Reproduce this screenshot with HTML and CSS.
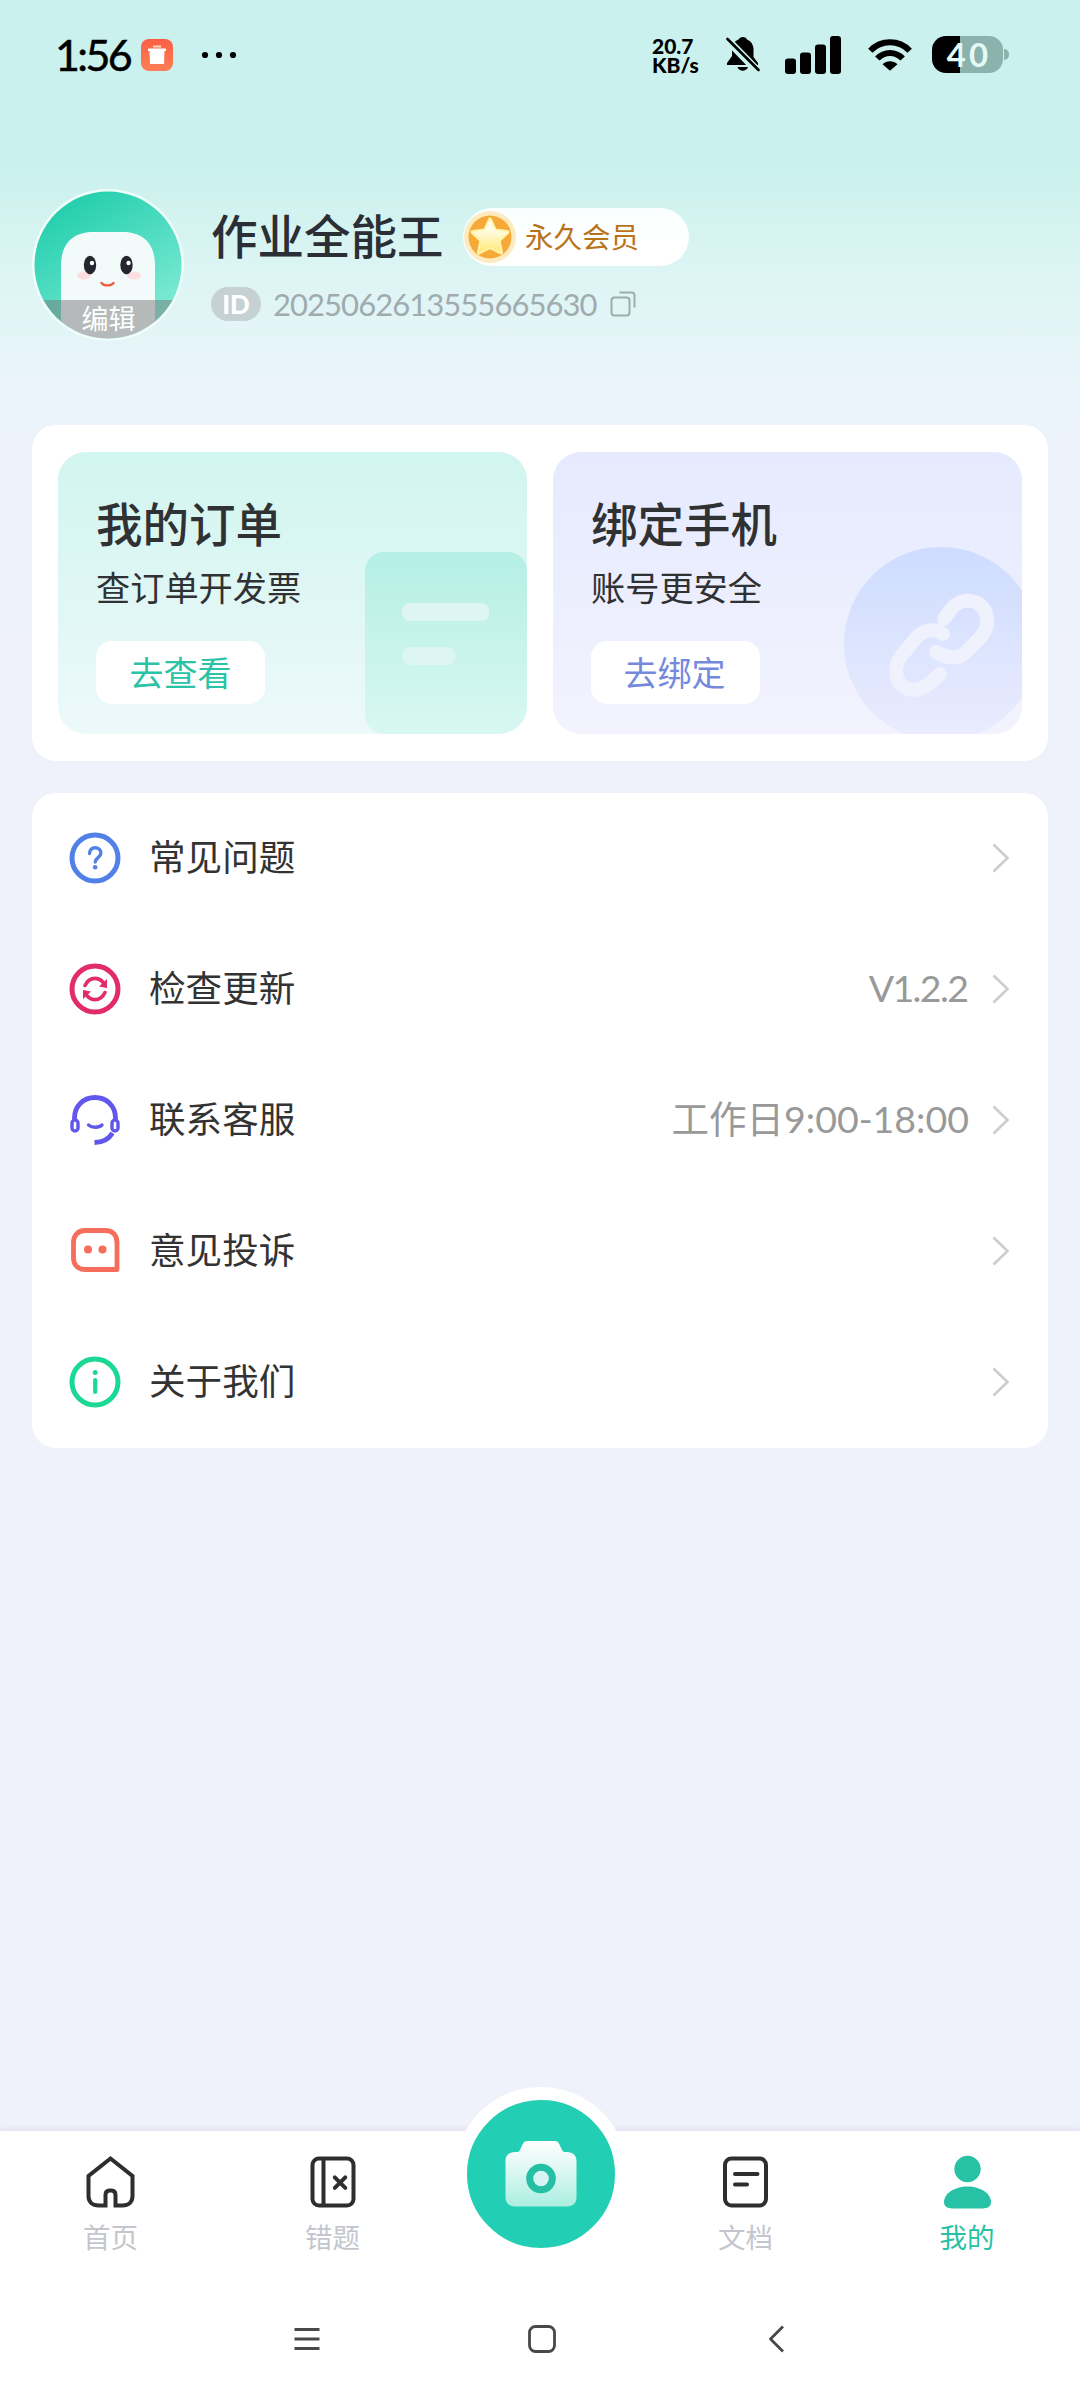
FILE: index.html
```
<!DOCTYPE html>
<html lang="zh-CN">
<head>
<meta charset="utf-8">
<title>我的</title>
<link rel="stylesheet" href="styles.css">
</head>
<body>
<div class="app">
  <header class="status">
    <div class="status-left">
      <span class="clock">1:56</span>
      <svg class="trash" width="32" height="32" viewBox="0 0 32 32"><defs><linearGradient id="tg" x1="0" y1="0" x2="0" y2="1"><stop offset="0" stop-color="#fb5f46"/><stop offset="1" stop-color="#fd7f54"/></linearGradient></defs><rect width="32" height="32" rx="8" fill="url(#tg)"/><path d="M12 6.500h8v2h-8z" fill="#fcd9c8"/><path d="M7 9.500h18v2.500h-1.500l-.5 13H9l-.5-13H7z" fill="#fff"/></svg>
      <svg class="dots" width="36" height="8" viewBox="0 0 36 8"><circle cx="4" cy="4" r="3.100"/><circle cx="18" cy="4" r="3.100"/><circle cx="32" cy="4" r="3.100"/></svg>
    </div>
    <div class="status-right">
      <div class="speed"><span>20.7</span><span>KB/s</span></div>
      <svg class="bell" width="34" height="36" viewBox="0 0 34 36"><path d="M17 1c2 0 3.500 1 4 2.500C25 5 27.500 9 27.500 13v8l4.500 6v2H1v-2l5-7v-7c0-4 2.500-8 6.500-9.500C13.200 2 15 1 17 1zM11.500 31h10.500c-1.500 5-9 5-10.500 0z"/><path d="M-1 1.500 33 36.500" stroke="#cbf2ec" stroke-width="8"/><path d="M1.500 3 32.500 34" stroke="#000" stroke-width="2.600" stroke-linecap="round"/></svg>
      <svg class="signal" width="58" height="38" viewBox="0 0 58 38"><rect x="0" y="22.500" width="11" height="15.500" rx="3"/><rect x="15" y="16.500" width="11" height="21.500" rx="3"/><rect x="30" y="8.500" width="11" height="29.500" rx="3"/><rect x="45" y="0" width="11" height="38" rx="3"/></svg>
      <svg class="wifi" width="44" height="32" viewBox="0 0 44 32"><g fill="none" stroke="#000" stroke-width="6"><path d="M2.300 11.800C13 .5 31 .5 41.700 11.800"/><path d="M9.300 19.500c7-7.500 18.400-7.500 25.400 0"/></g><path d="M14.500 25.300c4-4 11-4 15 0L22 31.800z"/></svg>
      <div class="battery"><span>40</span></div>
      <i class="battery-tip"></i>
    </div>
  </header>

  <section class="profile">
    <svg class="avatar" width="152" height="152" viewBox="0 0 152 152">
      <defs><linearGradient id="ag" x1="0" y1="0" x2=".6" y2="1"><stop offset=".2" stop-color="#28d0b0"/><stop offset="1" stop-color="#80ebd5"/></linearGradient><clipPath id="ac"><circle cx="76" cy="76" r="73.500"/></clipPath></defs>
      <circle cx="76" cy="76" r="76" fill="#effdfb"/>
      <g clip-path="url(#ac)">
        <rect width="152" height="152" fill="url(#ag)"/>
        <path d="M29 152V77c0-23 12-34 33-34h28c21 0 33 11 33 34v75z" fill="#f3fbfa"/>
        <ellipse cx="52" cy="86.500" rx="7" ry="4" fill="#fbdde2"/><ellipse cx="102" cy="86.500" rx="7" ry="4" fill="#fbdde2"/>
        <ellipse cx="58" cy="76" rx="6.200" ry="9.200" fill="#24272d"/><ellipse cx="94.500" cy="76" rx="6.200" ry="9.200" fill="#24272d"/>
        <circle cx="60" cy="74" r="2.200" fill="#fff"/><circle cx="96.500" cy="74" r="2.200" fill="#fff"/>
        <path d="M69.500 94c2.500 3.200 9.500 3.200 12 0" fill="none" stroke="#ef6043" stroke-width="2.400" stroke-linecap="round"/>
        <rect y="111" width="152" height="41" fill="#777" fill-opacity=".5"/>
      </g>
      <text x="76.500" y="139.500" text-anchor="middle" class="avatar-edit">编辑</text>
    </svg>
    <div class="who">
      <div class="name-row">
        <h1 class="name">作业全能王</h1>
        <div class="vip">
          <svg width="54" height="54" viewBox="0 0 54 54"><defs><linearGradient id="sg" x1="0" y1="0" x2="0" y2="1"><stop offset=".3" stop-color="#fffdea"/><stop offset="1" stop-color="#ffe973"/></linearGradient></defs><circle cx="27" cy="27" r="26" fill="#fdebc0"/><circle cx="27" cy="27" r="21.500" fill="#f6a936"/><path d="M27 9.500 32 20.500 44.500 22 35.500 30.500 38 42.500 27 37 16 42.500 18.500 30.500 9.500 22 22 20.500z" fill="#fff3a8" stroke="#fff3a8" stroke-width="4" stroke-linejoin="round"/><path d="M27 9.500 32 20.500 44.500 22 35.500 30.500 38 42.500 27 37 16 42.500 18.500 30.500 9.500 22 22 20.500z" fill="url(#sg)"/></svg>
          <span>永久会员</span>
        </div>
      </div>
      <div class="id-row">
        <span class="id-tag">ID</span>
        <span class="id-num">2025062613555665630</span>
        <svg width="26" height="26" viewBox="0 0 26 26" fill="none" stroke="#a0abae" stroke-width="2"><rect x="1.500" y="6.500" width="18" height="18" rx="3"/><path d="M9.500 1.500h12a3 3 0 0 1 3 3v12"/></svg>
      </div>
    </div>
  </section>

  <section class="panels">
    <article class="panel panel-order">
      <svg class="panel-art" width="162" height="182" viewBox="0 0 162 182"><defs><linearGradient id="dg" x1="0" y1="0" x2="0" y2="1"><stop offset="0" stop-color="#b5efe5"/><stop offset="1" stop-color="#d8f8f1"/></linearGradient></defs><rect width="162" height="182" rx="19" fill="url(#dg)"/><rect x="37" y="51" width="87" height="18" rx="8" fill="#ddf5f5"/><rect x="37" y="95" width="53" height="18" rx="8" fill="#ddf5f5"/></svg>
      <h2>我的订单</h2><p>查订单开发票</p><a class="go">去查看</a>
    </article>
    <article class="panel panel-bind">
      <svg class="panel-art" width="180" height="188" viewBox="0 0 180 188"><defs><linearGradient id="cg" x1="0" y1="0" x2="0" y2="1"><stop offset="0" stop-color="#cddcff"/><stop offset="1" stop-color="#ebecfe"/></linearGradient></defs><circle cx="99" cy="98" r="97" fill="url(#cg)"/><g fill="none" stroke="#eff1fd" stroke-width="14" stroke-linejoin="round"><path d="M102 73 109 63C118 52 134 52 142 63C148 73 145 84 138 92L124 106C116 114 105 112 94 106" stroke-linecap="round"/><path d="M101 88C90 81 80 85 74 92L60 109C50 122 53 138 66 143C77 147 87 139 98 128" stroke-linecap="round"/></g></svg>
      <h2>绑定手机</h2><p>账号更安全</p><a class="go">去绑定</a>
    </article>
  </section>

  <ul class="menu">
    <li>
      <svg class="ico" viewBox="0 0 52 52" fill="none" stroke="#5180e8" stroke-width="5"><circle cx="26" cy="26" r="23"/><path d="M20.500 21.500c0-3.500 2.500-5.800 5.700-5.800s5.700 2.200 5.700 5.300c0 4.500-5.700 4.600-5.700 9" stroke-width="3.400" stroke-linecap="round"/><circle cx="26.100" cy="35.300" r="2.300" fill="#5180e8" stroke="none"/></svg>
      <span class="label">常见问题</span><span class="value"></span>
      <svg class="chev" viewBox="0 0 18 30"><path d="M1.500 1.500 15.500 15 1.500 28.500"/></svg>
    </li>
    <li>
      <svg class="ico" viewBox="0 0 52 52" fill="none" stroke="#e22c67" stroke-width="5"><circle cx="26" cy="26" r="23"/><path d="M16 22.500c4.500-9.500 15.500-9.500 20 0M16 29.500c4.500 9.500 15.500 9.500 20 0" stroke-width="3.600" stroke-linecap="round"/><path d="M38 16v9l-8-1.500zM14 36v-9l8 1.500z" fill="#e22c67" stroke="none"/></svg>
      <span class="label">检查更新</span><span class="value ver">V1.2.2</span>
      <svg class="chev" viewBox="0 0 18 30"><path d="M1.500 1.500 15.500 15 1.500 28.500"/></svg>
    </li>
    <li>
      <svg class="ico" viewBox="0 0 52 52" fill="none" stroke="#6157ec" stroke-width="4.800"><path d="M5.500 25v-1C5.500 12 14.500 3.500 26 3.500S46.500 12 46.500 24v1"/><rect x="3" y="26" width="6" height="11" rx="3" stroke-width="3.400"/><rect x="43" y="26" width="6" height="11" rx="3" stroke-width="3.400"/><path d="M43.500 39c-3.500 6-9.500 9.300-18 9.500"/><path d="M19.500 31c3.500 3 10.500 3 13.500 0" stroke-width="3.400" stroke-linecap="round"/></svg>
      <span class="label">联系客服</span><span class="value">工作日<b class="hours">9:00-18:00</b></span>
      <svg class="chev" viewBox="0 0 18 30"><path d="M1.500 1.500 15.500 15 1.500 28.500"/></svg>
    </li>
    <li>
      <svg class="ico" viewBox="0 0 52 52" fill="none" stroke="#f66e5b" stroke-width="4.800"><path d="M16 5.500h20c8 0 12 5 12 12v27H16C9 44.500 4.500 40 4.500 33V17.500C4.500 10.500 9 5.500 16 5.500z" stroke-linejoin="round"/><g fill="#f66e5b" stroke="none"><circle cx="19" cy="24.500" r="4"/><circle cx="33.500" cy="24.500" r="4"/></g></svg>
      <span class="label">意见投诉</span><span class="value"></span>
      <svg class="chev" viewBox="0 0 18 30"><path d="M1.500 1.500 15.500 15 1.500 28.500"/></svg>
    </li>
    <li>
      <svg class="ico" viewBox="0 0 52 52" fill="none" stroke="#1bd994" stroke-width="5"><circle cx="26" cy="26" r="23"/><path d="M26.200 24v12" stroke-width="4.200" stroke-linecap="round"/><circle cx="26.200" cy="16.500" r="2.500" fill="#1bd994" stroke="none"/></svg>
      <span class="label">关于我们</span><span class="value"></span>
      <svg class="chev" viewBox="0 0 18 30"><path d="M1.500 1.500 15.500 15 1.500 28.500"/></svg>
    </li>
  </ul>

  <footer class="bottom">
    <nav class="tabs">
      <a class="tab"><svg width="54" height="54" viewBox="0 0 54 54" fill="none" stroke="#2e2e2e" stroke-width="4"><path d="M26.500 3.500 48.500 21v20c0 6-4 9.500-10 9.500h-7V40c0-3-1.500-4.500-4-4.500h-2c-2.500 0-4 1.500-4 4.500v10.500h-7C8.500 50.500 4.500 47 4.500 41V21z"/></svg><span>首页</span></a>
      <a class="tab"><svg width="54" height="54" viewBox="0 0 54 54" fill="none" stroke="#2e2e2e" stroke-width="4"><rect x="6.500" y="3.500" width="41" height="47" rx="6.500"/><path d="M17.500 3.500v47"/><path d="M28.800 22.300l10.500 10.500m0-10.500L28.800 32.800" stroke-linecap="round"/></svg><span>错题</span></a>
      <a class="shoot"><svg width="74" height="70" viewBox="0 0 74 70"><defs><linearGradient id="kg" x1="0" y1="0" x2="0" y2="1"><stop offset="0" stop-color="#fff"/><stop offset=".35" stop-color="#e5f9f6"/><stop offset="1" stop-color="#abeee0"/></linearGradient></defs><path d="M24 2h26c3 0 4.500 1 5.500 3.500L58 11c1 1.700 2 2 4 2h1c6 0 9.500 3.500 9.500 9v36c0 6-3.500 9.500-9.500 9.500H11C5 67.500 1.500 64 1.500 58V22c0-5.500 3.500-9 9.500-9h1c2 0 3-.3 4-2l2.500-5.500C19.500 3 21 2 24 2z" fill="url(#kg)"/><circle cx="37" cy="39.500" r="11.300" fill="#d6f5f2" stroke="#25bfa5" stroke-width="7"/></svg></a>
      <a class="tab"><svg width="54" height="54" viewBox="0 0 54 54" fill="none" stroke="#2e2e2e" stroke-width="4"><rect x="6" y="3.500" width="41" height="47" rx="6.500"/><path d="M16 19h22.500M16 29.500h12" stroke-linecap="round"/></svg><span>文档</span></a>
      <a class="tab active"><svg width="54" height="54" viewBox="0 0 54 54" fill="#27c1a6"><circle cx="27.500" cy="14" r="13.200"/><path d="M27.500 31.500c13 0 23.500 7 23.500 15.500 0 4.500-3 6.500-10 6.500h-27C7 53.500 4 51.500 4 47c0-8.500 10.500-15.500 23.500-15.500z"/></svg><span>我的</span></a>
    </nav>
    <div class="sysnav">
      <svg width="28" height="28" viewBox="0 0 28 28"><path d="M1.500 4.500h25M1.500 14h25M1.500 23.500h25"/></svg>
      <svg width="28" height="28" viewBox="0 0 28 28"><rect x="1.500" y="1.500" width="25" height="25" rx="6"/></svg>
      <svg width="28" height="28" viewBox="0 0 28 28"><path d="M20 1.500 7.500 14 20 26.500"/></svg>
    </div>
  </footer>
</div>
</body>
</html>
```
FILE: styles.css
```
* { box-sizing: border-box; margin: 0; padding: 0; }
body { font-family: Lato, "Noto Sans CJK SC", sans-serif; color: #303133; }
svg { display: block; flex: none; }
.app {
  width: 1080px; height: 2400px; display: flex; flex-direction: column; overflow: hidden;
  background: #f0f2fb linear-gradient(180deg, #caf1ed 0, #caf1ed 165px, #dcf5f4 270px, #ecf4fb 400px, #f0f2fb 700px) no-repeat;
}

/* Status bar */
.status { height: 110px; display: flex; justify-content: space-between; align-items: flex-start; padding: 36px 71px 0 55px; color: #000; }
.status-left, .status-right { display: flex; }
.clock { font-size: 43px; line-height: 38px; letter-spacing: -2.6px; width: 86px; white-space: nowrap; -webkit-text-stroke: .5px #000; }
.trash { margin-top: 3px; }
.dots { margin: 15px 0 0 28px; }
.speed { display: flex; flex-direction: column; gap: 1px; width: 74px; padding-top: 1px; font: 900 21px/18px Lato, sans-serif; }
.bell { margin-right: 25px; }
.signal { margin-right: 25px; }
.wifi { margin: 3px 20px 0 0; }
.battery {
  width: 71px; height: 37px; border-radius: 14px; display: flex; align-items: center; justify-content: center;
  background: linear-gradient(90deg, #000 28px, #8cb2ad 28px); color: #e3faf5; font: 700 33px/37px Lato, sans-serif; letter-spacing: 3px; padding-left: 3px;
}
.battery-tip { width: 5px; height: 11px; margin: 13px 0 0 1px; border-radius: 0 6px 6px 0; background: #8cb2ad; }

/* Profile */
.profile { height: 315px; display: flex; padding: 79px 0 0 32px; }
.avatar-edit { font: 27px "Noto Sans CJK SC", sans-serif; fill: #fff; }
.who { margin-left: 27px; padding-top: 19px; }
.name-row { display: flex; align-items: center; height: 58px; }
.name { font-size: 46.500px; line-height: 56px; padding-bottom: 2px; font-weight: 500; color: #2b2f35; width: 252px; white-space: nowrap; }
.vip { width: 226px; height: 58px; border-radius: 29px; background: linear-gradient(180deg, #f8fffe, #fff 60%); display: flex; align-items: center; }
.vip span { margin-left: 8px; font-size: 28.500px; line-height: 58px; color: #b9741b; white-space: nowrap; }
.id-row { display: flex; align-items: center; height: 34px; margin-top: 21px; }
.id-tag { width: 50px; height: 34px; border-radius: 17px; background: #c5d1d3; color: #fff; font: 900 26px/34px Lato, sans-serif; text-align: center; }
.id-num { width: 337px; margin-left: 12px; font-size: 31px; line-height: 34px; letter-spacing: -.95px; color: #a0abae; white-space: nowrap; }

/* Feature panels */
.panels { margin: 0 32px; height: 336px; padding: 27px 26px; display: flex; gap: 26px; background: #fff; border-radius: 24px; }
.panel { position: relative; flex: 1; overflow: hidden; border-radius: 28px; padding: 42px 38px 0; }
.panel-order { background: linear-gradient(180deg, #d1f5ef, #edf9fa); }
.panel-bind { background: linear-gradient(180deg, #e5eafe, #f3f3fe); }
.panel-art { position: absolute; right: 0; bottom: 0; }
.panel h2 { font-size: 46.500px; line-height: 60px; font-weight: 500; }
.panel p { margin-top: 9px; font-size: 34.200px; line-height: 50px; }
.go { display: flex; align-items: center; justify-content: center; margin-top: 28px; width: 169px; height: 63px; padding-bottom: 2px; border-radius: 16px; background: #fff; font-size: 34px; color: #2bc3a5; }
.panel-bind .go { color: #7589dc; padding-right: 2px; }

/* Menu */
.menu { margin: 32px 32px 0; height: 655px; list-style: none; background: #fff; border-radius: 24px; }
.menu li { height: 131px; display: flex; align-items: center; padding: 0 38px 1px 37px; }
.ico { width: 52px; height: 52px; }
.label { margin-left: 28px; padding-bottom: 2px; font-size: 36.600px; line-height: 48px; color: #333; }
.value { margin-left: auto; padding-bottom: 2px; font-size: 37.500px; line-height: 48px; color: #999; white-space: nowrap; }
.hours { font-weight: 400; letter-spacing: 0; }
.ver { letter-spacing: -1.6px; }
.chev { width: 18px; height: 30px; margin-left: 23px; fill: none; stroke: #cdcdcd; stroke-width: 2.600; }
.ver + .chev { margin-left: 24.600px; }

/* Bottom navigation */
.bottom { margin-top: auto; height: 269px; background: #fff; box-shadow: 0 -2px 6px rgba(140, 120, 160, .15); }
.tabs { height: 150px; display: grid; grid-template-columns: 221px 223px 193px 217px 226px; }
.tab { display: flex; flex-direction: column; align-items: center; padding-top: 24px; }
.tab span { margin-top: 9px; font-size: 27.500px; line-height: 40px; color: #c4c6ce; }
.tab.active span { color: #27c1a6; }
.shoot { width: 174px; height: 174px; margin: -44px auto 0; border: 13.500px solid #fff; border-radius: 50%; background: #23cfb4; display: flex; align-items: center; justify-content: center; }
.sysnav { display: flex; justify-content: center; gap: 207px; padding: 44px 0 0 3px; }
.sysnav svg { fill: none; stroke: #484848; stroke-width: 2.800; stroke-linejoin: round; }
```
